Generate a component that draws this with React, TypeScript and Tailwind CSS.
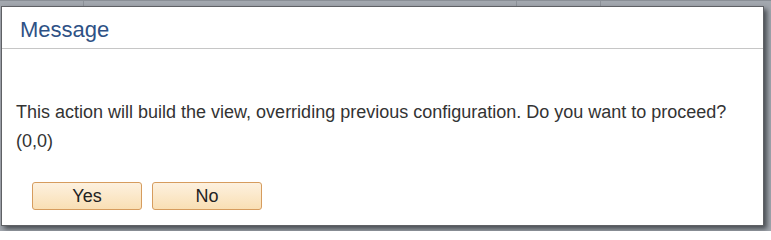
export default function App() {
  return (
    <div
      className="w-[771px] h-[231px] overflow-hidden bg-[#a3a8af] flex flex-col"
      style={{ fontFamily: '"Liberation Sans", Arial, sans-serif' }}
    >
      {/* page behind the overlay */}
      <div className="h-[6px] flex shrink-0 border-t border-[#8a8f96]">
        <div className="w-[84px] border-r border-[#8d9299]" />
        <div className="w-[433px] border-r border-[#8d9299]" />
        <div className="w-[84px] border-r border-[#8d9299]" />
        <div className="flex-1" />
      </div>

      {/* Dialog */}
      <div className="ml-[1px] w-[763px] h-[220px] shrink-0 bg-white border border-[#5f6165] shadow-[3px_3px_5px_rgba(40,44,50,0.75)] flex flex-col">
        <div className="h-[42px] shrink-0 border-b border-[#c6c6c6] flex items-center pl-[18px]">
          <h2 className="text-[22px] text-[#2e5185] pt-[3px]">Message</h2>
        </div>

        <div className="pl-[14px] pt-[49px] text-[18px] leading-[29px] text-[#333333]">
          <p>This action will build the view, overriding previous configuration. Do you want to proceed?</p>
          <p>(0,0)</p>
        </div>

        <div className="flex gap-[10px] pl-[30px] mt-[26px]">
          <button className="w-[110px] h-[28px] rounded-[3px] border border-[#d69c5e] bg-gradient-to-b from-[#fdf1df] to-[#f9dfb4] text-[18px] text-[#222222]">
            Yes
          </button>
          <button className="w-[110px] h-[28px] rounded-[3px] border border-[#d69c5e] bg-gradient-to-b from-[#fdf1df] to-[#f9dfb4] text-[18px] text-[#222222]">
            No
          </button>
        </div>
      </div>
    </div>
  );
}
